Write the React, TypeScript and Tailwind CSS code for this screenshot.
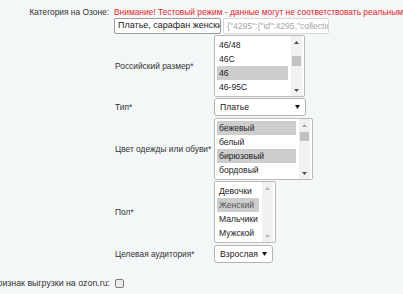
import React from "react";

type Opt = { label: string; selected?: boolean; dim?: boolean };

function Tri({ down, color }: { down?: boolean; color: string }) {
  return (
    <svg width="5" height="3" viewBox="0 0 5 3">
      <path d={down ? "M0 0H5L2.5 3Z" : "M0 3H5L2.5 0Z"} fill={color} />
    </svg>
  );
}

function Scrollbar({
  upColor,
  downColor,
  thumb,
}: {
  upColor: string;
  downColor: string;
  thumb?: string;
}) {
  return (
    <div className="flex w-[11px] shrink-0 flex-col bg-[#f1f1f1] py-[1px]">
      <div className="flex h-[10px] items-center justify-center">
        <Tri color={upColor} />
      </div>
      <div className="flex-1">
        {thumb && <div className={"mx-[1px] bg-[#c1c1c1] " + thumb}></div>}
      </div>
      <div className="flex h-[10px] items-center justify-center">
        <Tri down color={downColor} />
      </div>
    </div>
  );
}

function ListBox({
  options,
  width,
  scroll,
}: {
  options: Opt[];
  width: string;
  scroll: React.ReactNode;
}) {
  return (
    <div
      className={
        "flex h-[62px] gap-[3px] rounded-[2px] border border-[#b9b9b9] bg-white pr-[2px] text-[8.6px] " +
        width
      }
    >
      <div className="flex-1 overflow-hidden py-[2px] pl-[2px]">
        {options.map((o) => (
          <div
            key={o.label}
            className={
              "h-[14px] whitespace-nowrap pl-[2px] leading-[14px] " +
              (o.selected ? "bg-[#cdcdcd] " : "") +
              (o.dim ? "text-[#555]" : "text-[#222]")
            }
          >
            {o.label}
          </div>
        ))}
      </div>
      {scroll}
    </div>
  );
}

function Select({ value, width }: { value: string; width: string }) {
  return (
    <div
      className={
        "flex h-[18px] items-center justify-between rounded-[3px] border border-[#b3b3b3] bg-white pl-[5px] pr-[5px] text-[8.6px] text-[#222] " +
        width
      }
    >
      <span>{value}</span>
      <svg width="5" height="4" viewBox="0 0 5 4">
        <path d="M0 0H5L2.5 4Z" fill="#111" />
      </svg>
    </div>
  );
}

function Row({
  label,
  children,
  className = "",
}: {
  label: string;
  children: React.ReactNode;
  className?: string;
}) {
  return (
    <div className={"flex items-center " + className}>
      <div className="w-[100px] shrink-0 whitespace-nowrap pl-[1px] text-[#333]">
        {label}
      </div>
      {children}
    </div>
  );
}

export default function App() {
  return (
    <div className="h-[294px] w-[403px] overflow-hidden bg-[#f4f7f8] font-['Liberation_Sans',Arial,sans-serif] text-[8.4px] text-[#333]">
      <div className="flex pt-[7px]">
        <div className="flex w-[109px] shrink-0 justify-end whitespace-nowrap leading-[11px]">
          Категория на Озоне:
        </div>
        <div className="min-w-0 pl-[5px]">
          <div className="h-[11px] whitespace-nowrap leading-[11px] text-[#e0262b]">
            Внимание! Тестовый режим - данные могут не соответствовать реальным
            данным
          </div>

          <div className="flex gap-[2px]">
            <div className="flex h-[16px] w-[107px] items-center overflow-hidden whitespace-nowrap rounded-[2px] border border-[#9a9a9a] bg-white pl-[3px] text-[9px] text-[#222]">
              Платье, сарафан женский
            </div>
            <div className="flex h-[16px] w-[106px] items-center overflow-hidden whitespace-nowrap rounded-[2px] border border-[#d8d8d8] bg-white pl-[3px] text-[8.6px] text-[#a5a5a5]">
              {'{"4295":{"id":4295,"collection":1}}'}
            </div>
          </div>

          <Row label="Российский размер*" className="mt-[1px]">
            <ListBox
              width="w-[91px]"
              options={[
                { label: "46/48" },
                { label: "46C" },
                { label: "46", selected: true },
                { label: "46-95C" },
              ]}
              scroll={
                <Scrollbar
                  upColor="#505050"
                  downColor="#505050"
                  thumb="mt-[9px] h-[10px]"
                />
              }
            />
          </Row>

          <Row label="Тип*" className="mt-[1px]">
            <Select value="Платье" width="w-[92px]" />
          </Row>

          <Row label="Цвет одежды или обуви*" className="mt-[2px]">
            <ListBox
              width="w-[99px]"
              options={[
                { label: "бежевый", selected: true },
                { label: "белый" },
                { label: "бирюзовый", selected: true },
                { label: "бордовый" },
              ]}
              scroll={
                <Scrollbar
                  upColor="#a8a8a8"
                  downColor="#505050"
                  thumb="mt-[2px] h-[9px]"
                />
              }
            />
          </Row>

          <Row label="Пол*" className="mt-[1px]">
            <ListBox
              width="w-[62px]"
              options={[
                { label: "Девочки" },
                { label: "Женский", selected: true, dim: true },
                { label: "Мальчики" },
                { label: "Мужской" },
              ]}
              scroll={<Scrollbar upColor="#b5b5b5" downColor="#b5b5b5" />}
            />
          </Row>

          <Row label="Целевая аудитория*" className="mt-[2px]">
            <Select value="Взрослая" width="w-[59px]" />
          </Row>
        </div>
      </div>

      <div className="mt-[14px] flex items-center">
        <div className="flex w-[110px] shrink-0 justify-end whitespace-nowrap text-[8.8px]">
          Признак выгрузки на ozon.ru:
        </div>
        <div className="pl-[5px]">
          <div className="h-[9px] w-[9px] rounded-[2px] border border-[#7a7a7a] bg-[#ececec]"></div>
        </div>
      </div>
    </div>
  );
}
